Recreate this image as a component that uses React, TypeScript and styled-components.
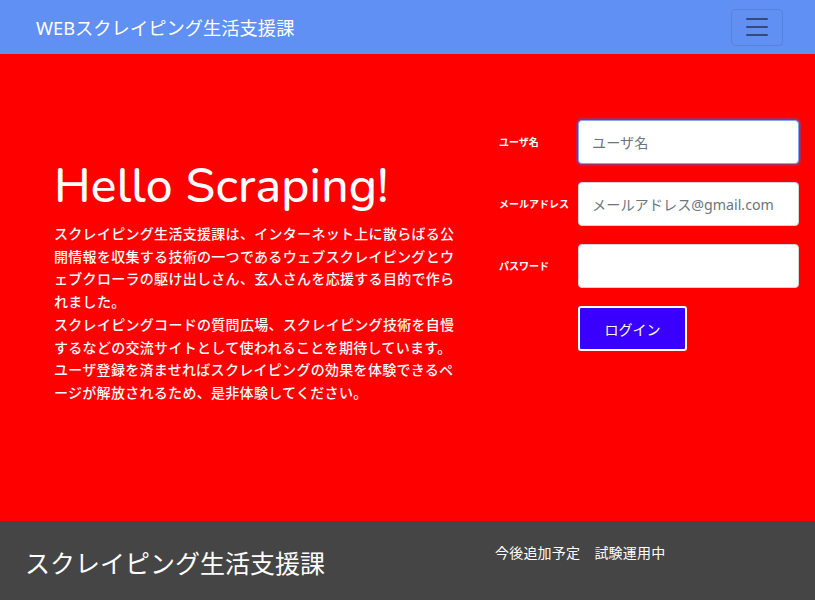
import React from "react";
import styled, { createGlobalStyle } from "styled-components";

const Global = createGlobalStyle`
  html, body { margin: 0; padding: 0; }
  body { font-family: "Noto Sans", "Noto Sans CJK JP", sans-serif; background: #fff; }
  * { box-sizing: border-box; }
`;

const Nav = styled.nav`
  height: 54px;
  background: #6190f4;
  display: flex;
  align-items: center;
  justify-content: space-between;
  padding: 0 32px 0 36px;
`;

const Brand = styled.div`
  color: #fff;
  font-family: "Noto Sans", "Noto Sans CJK JP", sans-serif;
  font-size: 18.3px;
  letter-spacing: 0;
`;

const Toggler = styled.button`
  width: 52px;
  height: 37px;
  border: 1px solid rgba(0, 0, 0, 0.1);
  border-radius: 4px;
  background: transparent;
  display: flex;
  flex-direction: column;
  justify-content: center;
  align-items: center;
  gap: 6px;
  padding: 0;
`;

const Bar = styled.span`
  display: block;
  width: 22px;
  height: 2px;
  background: rgba(40, 50, 80, 0.75);
  border-radius: 1px;
`;

const Hero = styled.section`
  height: 467px;
  background: #ff0000;
  display: flex;
  align-items: flex-start;
`;

const Intro = styled.div`
  width: 410px;
  margin-left: 54px;
  margin-top: 102px;
  color: #fff;
`;

const Title = styled.h1`
  margin: 0 0 6px 0;
  font-family: "Nunito", "Lato", "Noto Sans", sans-serif;
  font-weight: 500;
  font-size: 48px;
  line-height: 60px;
  letter-spacing: 0.2px;
`;

const Lead = styled.p`
  margin: 0;
  font-family: "Noto Sans CJK JP", sans-serif;
  font-size: 14px;
  font-weight: 500;
  line-height: 22.7px;
  letter-spacing: 0.3px;
`;

const Form = styled.form`
  margin-left: 35px;
  margin-top: 66px;
  display: flex;
  flex-direction: column;
  gap: 18px;
`;

const Row = styled.div`
  display: flex;
  align-items: center;
`;

const Label = styled.label`
  width: 79px;
  color: #fff;
  font-family: "Noto Sans CJK JP", sans-serif;
  font-size: 10px;
  font-weight: 700;
  margin-top: -2px;
`;

const Input = styled.input<{ $focus?: boolean }>`
  width: 221px;
  height: 44px;
  border-radius: 4px;
  border: 1px solid ${(p) => (p.$focus ? "#80a8f0" : "#ced4da")};
  box-shadow: ${(p) => (p.$focus ? "0 0 0 2px rgba(70, 90, 200, 0.45)" : "none")};
  background: #fff;
  padding: 0 13px;
  font-family: "Noto Sans", "Noto Sans CJK JP", sans-serif;
  font-size: 14.2px;
  color: #495057;
  outline: none;
  &::placeholder { color: #6c757d; }
`;

const Submit = styled.button`
  margin-left: 79px;
  width: 109px;
  height: 45px;
  background: #3a00ff;
  color: #fff;
  border: 2px solid #fff;
  border-radius: 3px;
  font-family: "Noto Sans CJK JP", sans-serif;
  font-size: 14px;
  align-self: flex-start;
`;

const Footer = styled.footer`
  height: 79px;
  background: #454545;
  display: flex;
  align-items: flex-start;
  color: #fff;
`;

const FooterTitle = styled.div`
  width: 495px;
  padding-left: 25px;
  padding-top: 23px;
  font-family: "Noto Sans CJK JP", sans-serif;
  font-size: 25px;
  letter-spacing: 0;
`;

const FooterNote = styled.div`
  padding-top: 21px;
  font-family: "Noto Sans CJK JP", sans-serif;
  font-size: 14px;
  letter-spacing: 0.2px;
  white-space: pre;
`;

export default function App() {
  return (
    <>
      <Global />
      <Nav>
        <Brand>WEBスクレイピング生活支援課</Brand>
        <Toggler aria-label="menu">
          <Bar />
          <Bar />
          <Bar />
        </Toggler>
      </Nav>
      <Hero>
        <Intro>
          <Title>Hello Scraping!</Title>
          <Lead>
            スクレイピング生活支援課は、インターネット上に散らばる公開情報を収集する技術の一つであるウェブスクレイピングとウェブクローラの駆け出しさん、玄人さんを応援する目的で作られました。
            <br />
            スクレイピングコードの質問広場、スクレイピング技術を自慢するなどの交流サイトとして使われることを期待しています。
            <br />
            ユーザ登録を済ませればスクレイピングの効果を体験できるページが解放されるため、是非体験してください。
          </Lead>
        </Intro>
        <Form onSubmit={(e) => e.preventDefault()}>
          <Row>
            <Label>ユーザ名</Label>
            <Input $focus placeholder="ユーザ名" />
          </Row>
          <Row>
            <Label>メールアドレス</Label>
            <Input placeholder="メールアドレス@gmail.com" />
          </Row>
          <Row>
            <Label>パスワード</Label>
            <Input type="password" />
          </Row>
          <Submit type="submit">ログイン</Submit>
        </Form>
      </Hero>
      <Footer>
        <FooterTitle>スクレイピング生活支援課</FooterTitle>
        <FooterNote>今後追加予定　試験運用中</FooterNote>
      </Footer>
    </>
  );
}
